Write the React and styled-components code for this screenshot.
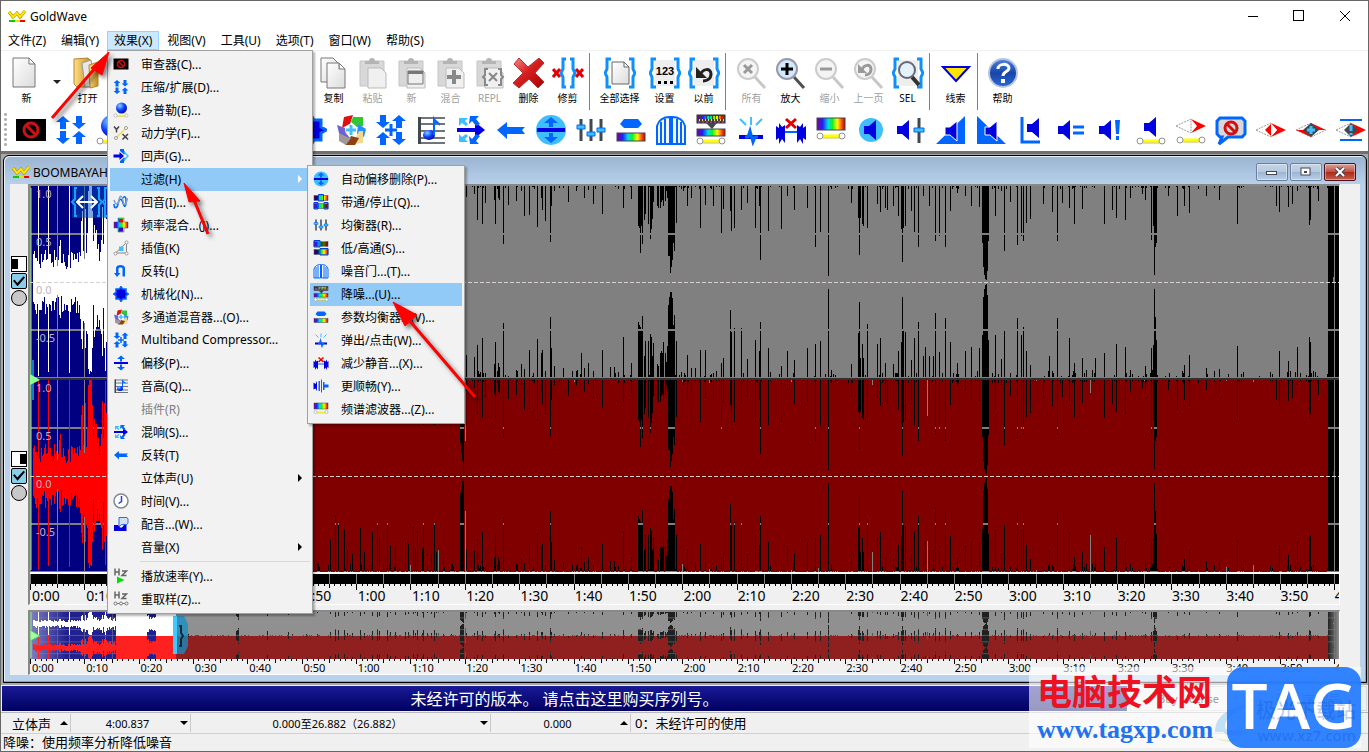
import React from 'react';
import styled, { createGlobalStyle, css } from 'styled-components';

const GlobalStyle = createGlobalStyle`
  * {
    box-sizing: border-box;
  }
  body {
    margin: 0;
    background: #f0f0f0;
  }
  body, button, input {
    font-family: 'Noto Sans', 'Noto Sans CJK SC', sans-serif;
    font-size: 12px;
    color: #000;
  }
  button {
    border: 0;
    padding: 0;
    background: none;
  }
`;

/* ---------- icons ---------- */

const BLUE = '#0066ff';
const DEEP = '#0000e0';
const SKY = '#40bfff';

const GradientDefs = styled.svg`
  position: absolute;
  width: 0;
  height: 0;
`;

const Defs = () => (
  <GradientDefs aria-hidden="true">
    <defs>
      <linearGradient id="spectrum">
        <stop offset="0" stopColor="#800090" />
        <stop offset=".2" stopColor="#2020ff" />
        <stop offset=".4" stopColor="#00e0e0" />
        <stop offset=".55" stopColor="#10f020" />
        <stop offset=".72" stopColor="#ffff00" />
        <stop offset=".88" stopColor="#ff5000" />
        <stop offset="1" stopColor="#c00000" />
      </linearGradient>
      <linearGradient id="paper" x1="0" y1="0" x2="1" y2="1">
        <stop offset="0" stopColor="#fff" />
        <stop offset="1" stopColor="#dcdcdc" />
      </linearGradient>
      <linearGradient id="folder">
        <stop offset="0" stopColor="#ffe08a" />
        <stop offset="1" stopColor="#c48a1c" />
      </linearGradient>
      <linearGradient id="redx" x1="0" y1="0" x2="1" y2="1">
        <stop offset="0" stopColor="#f88" />
        <stop offset=".45" stopColor="#d62020" />
        <stop offset="1" stopColor="#a80000" />
      </linearGradient>
      <radialGradient id="ball" cx=".35" cy=".3" r=".8">
        <stop offset="0" stopColor="#7fd4ff" />
        <stop offset=".5" stopColor="#1040ff" />
        <stop offset="1" stopColor="#0000a0" />
      </radialGradient>
      <linearGradient id="help" x1="0" y1="0" x2="0" y2="1">
        <stop offset="0" stopColor="#4f83e6" />
        <stop offset=".5" stopColor="#1746a8" />
        <stop offset="1" stopColor="#2f66d8" />
      </linearGradient>
      <linearGradient id="navy" x1="0" y1="0" x2="1" y2="0">
        <stop offset="0" stopColor="#8080c0" />
        <stop offset=".25" stopColor="#202090" />
      </linearGradient>
      <linearGradient id="tail">
        <stop offset="0" stopColor="#202020" />
        <stop offset="1" stopColor="#909090" />
      </linearGradient>
    </defs>
  </GradientDefs>
);

const up = (x, y) => `M${x} ${y}l7 6h-4v7h-6v-7h-4z`;
const down = (x, y) => `M${x} ${y}l7-6h-4v-7h-6v7h-4z`;

const Link = ({ y = 27 }) => (
  <g>
    <path d={`M8 ${y}h16`} stroke="#ffff00" strokeWidth="3" />
    <path d={`M8 ${y + 2}h16`} stroke="#c8c040" strokeWidth="1" />
    <circle cx="5" cy={y} r="3" fill="#fff" stroke="#909090" />
    <circle cx="27" cy={y} r="3" fill="#fff" stroke="#909090" />
  </g>
);

const Spectrum = ({ y, h = 8, x = 2, w = 28 }) => (
  <rect x={x} y={y} width={w} height={h} fill="url(#spectrum)" stroke="#404850" />
);

const No = ({ cx = 16, cy = 16, r = 7 }) => (
  <g fill="none" stroke="#d01010" strokeWidth="3">
    <circle cx={cx} cy={cy} r={r} />
    <path d={`M${cx - 5} ${cy - 5}l10 10`} />
  </g>
);

const Braces = () => (
  <path
    d="M7 2H3v10l-2 4 2 4v10h4M25 2h4v10l2 4-2 4v10h-4"
    fill="none"
    stroke="#1090ff"
    strokeWidth="3"
  />
);

const Clipboard = ({ children }) => (
  <g>
    <path d="M3 4h24v25H3z" fill="#d8d8d8" stroke="#c4c4c4" />
    <path d="M8 7V4h4a3 3 0 0 1 6 0h4v3z" fill="#b4b4b4" />
    <path d="M11 11h13l5 5v15H11z" fill="#f0f0f0" stroke="#bbb" />
    {children}
  </g>
);

const Lens = ({ dim, children }) => (
  <g>
    <path d="M19 20l10 11" stroke={dim ? '#c8c8c8' : '#505050'} strokeWidth="3" />
    <circle cx="12" cy="12" r="10" fill={dim ? '#f4f4f4' : '#cfe8fb'} stroke={dim ? '#ccc' : '#99a'} strokeWidth="2" />
    {children}
  </g>
);

const Eye = ({ y = 16, children, flip }) => (
  <g>
    <path
      d={`M1 ${y}L16 ${y - 7}L16 ${y + 7}z`}
      fill="#fff"
      stroke="#999"
      strokeDasharray="2 1"
    />
    {flip && <path d={`M1 ${y}h15v7z`} fill="#f00" />}
    <path
      d={flip ? `M16 ${y - 7}L31 ${y}L16 ${y}z` : `M16 ${y - 7}L31 ${y}L16 ${y + 7}l6-7z`}
      fill="#f00"
    />
    {flip && <path d={`M16 ${y + 7}L31 ${y}`} stroke="#999" strokeDasharray="2 1" />}
    {children}
  </g>
);

const speaker = (x, y) => `M${x} ${y - 4}h5l7-6v20l-7-6h-5z`;

const icons = {
  file: <path d="M2 1h16l6 6v23H2zM18 1v6h6" fill="url(#paper)" stroke="#777" />,
  folder: (
    <g>
      <path d="M2 2l14-1 3 3v26H5l-3-3z" fill="url(#folder)" stroke="#b8862a" />
      <path d="M10 6l9-3 4 26-10 1z" fill="#e8e8e8" stroke="#999" />
      <path d="M17 8l9-3v24l-8 2z" fill="url(#folder)" stroke="#b8862a" />
    </g>
  ),
  copy: (
    <g fill="url(#paper)" stroke="#777">
      <path d="M3 1h12l6 6v18H3z" />
      <path d="M9 6h12l6 6v19H9zM21 6v6h6" />
    </g>
  ),
  paste: <Clipboard />,
  pasteNew: (
    <Clipboard>
      <path d="M12 14h15v13H12z" fill="#eee" stroke="#777" />
      <path d="M12 14h15v3H12z" fill="#777" />
    </Clipboard>
  ),
  pasteMix: (
    <Clipboard>
      <path d="M19 13v14M12 20h14" stroke="#888" strokeWidth="4" />
    </Clipboard>
  ),
  pasteRepl: (
    <Clipboard>
      <path
        d="M14 12h-3v6l-2 2 2 2v6h3M24 12h3v6l2 2-2 2v6h-3M15 16l8 8M23 16l-8 8"
        fill="none"
        stroke="#888"
        strokeWidth="2"
      />
    </Clipboard>
  ),
  remove: (
    <path
      d="M6 1l9 9L26 1l5 5-9 10 9 9-6 6-9-9-10 9-6-5 10-10-9-9z"
      fill="url(#redx)"
      stroke="#b83030"
    />
  ),
  trim: (
    <g fill="none">
      <path d="M14 2h-3v10l-2 4 2 4v10h3M18 2h3v10l2 4-2 4v10h-3" stroke="#1090ff" strokeWidth="3" />
      <path d="M1 12l7 8M8 12l-7 8M24 12l7 8M31 12l-7 8" stroke="#e00000" strokeWidth="3" />
    </g>
  ),
  selectAll: (
    <g>
      <path d="M8 5h12l5 5v17H8zM20 5v5h5" fill="url(#paper)" stroke="#666" />
      <Braces />
    </g>
  ),
  set: (
    <g>
      <rect x="6" y="3" width="20" height="26" fill="#eee" />
      <Braces />
      <text x="16" y="18" fontSize="11" fontWeight="700" textAnchor="middle" fontFamily="Liberation Sans">123</text>
      <path d="M9 24h3v3H9zM15 24h3v3h-3zM21 24h3v3h-3z" />
    </g>
  ),
  previous: (
    <g>
      <rect x="6" y="3" width="20" height="26" fill="#eee" />
      <Braces />
      <path d="M12 18c3-7 11-7 11-1s-6 7-8 7" fill="none" stroke="#222" strokeWidth="3" />
      <path d="M8 10v11h11z" fill="#222" />
    </g>
  ),
  zoomAll: (
    <Lens dim>
      <path d="M8 8l8 8M16 8l-8 8" stroke="#999" strokeWidth="3" />
    </Lens>
  ),
  zoomIn: (
    <Lens>
      <path d="M12 6v12M6 12h12" stroke="#000" strokeWidth="3" />
    </Lens>
  ),
  zoomOut: (
    <Lens dim>
      <path d="M6 12h12" stroke="#999" strokeWidth="3" />
    </Lens>
  ),
  zoomPrev: (
    <Lens dim>
      <path d="M9 13c2-6 9-6 9-1s-4 6-6 6" fill="none" stroke="#999" strokeWidth="3" />
      <path d="M5 7v9h9z" fill="#999" />
    </Lens>
  ),
  zoomSel: (
    <g>
      <rect x="6" y="3" width="20" height="26" fill="#eee" />
      <Braces />
      <path d="M20 20l7 8" stroke="#333" strokeWidth="4" />
      <circle cx="15" cy="13" r="8" fill="#e4f2fd" stroke="#667" strokeWidth="2" />
    </g>
  ),
  cue: <path d="M3 10h26L16 24z" fill="#ffe600" stroke="#0000e0" strokeWidth="2" />,
  help: (
    <g>
      <circle cx="16" cy="16" r="14" fill="url(#help)" stroke="#b8c4dc" strokeWidth="2" />
      <path d="M11 12c0-6 11-6 11-1 0 4-6 3-6 8" fill="none" stroke="#fff" strokeWidth="3" />
      <rect x="14" y="22" width="4" height="4" fill="#fff" />
    </g>
  ),
  censor: (
    <g>
      <rect x="1" y="5" width="30" height="22" />
      <No />
    </g>
  ),
  compress: <path d={up(8, 2) + down(24, 15) + down(8, 30) + up(24, 17)} fill={BLUE} />,
  doppler: (
    <g>
      <circle cx="17" cy="12" r="11" fill="url(#ball)" />
      <Link />
    </g>
  ),
  dynamics: (
    <g fill="none" stroke="#444" strokeWidth="3">
      <path d="M2 3l5 6 5-6M7 9v6M19 18l11 11M30 18L19 29" />
      <path d="M7 25L25 7" stroke="#f0e040" />
      <circle cx="6" cy="26" r="3" stroke="#999" strokeWidth="2" fill="#fff" />
      <circle cx="26" cy="6" r="3" stroke="#999" strokeWidth="2" fill="#fff" />
    </g>
  ),
  echo: (
    <g>
      <path d="M1 13h12V8l9 8-9 8v-5H1z" fill={DEEP} />
      <path d="M14 2h8v3l4 6-4 2-8-7zM14 30h8v-3l4-6-4-2-8 7z" fill={BLUE} />
      <path d="M22 8l8 8-8 8" fill="none" stroke={SKY} strokeWidth="3" />
    </g>
  ),
  flanger: (
    <g fill="none" strokeWidth="3">
      <path d="M2 20c0 10 6 10 8 0s6-14 10-2 6 6 6-4-3-10-6-6" stroke={BLUE} />
      <path d="M2 12c4 12 8 10 10 0s6-10 8 2 6 8 9-6" stroke="#7aa0c8" />
    </g>
  ),
  filterMix: (
    <g>
      <path d="M10 2h12v8h8v12h-8v8H10v-8H2V10h8z" fill="url(#spectrum)" stroke="#404850" />
      <path d="M12 4h8v7h-8z" fill="#f00" />
      <path d="M12 21h8v8h-8z" fill="#4000c0" />
    </g>
  ),
  interpolate: (
    <g>
      <path d="M5 26L27 5v21z" fill="#eef2f4" stroke="#888" strokeWidth="2" />
      <rect x="12" y="13" width="9" height="9" fill={SKY} />
      <g fill="#fff" stroke="#999" strokeWidth="2">
        <circle cx="5" cy="27" r="3" />
        <circle cx="27" cy="5" r="3" />
        <circle cx="27" cy="27" r="3" />
      </g>
    </g>
  ),
  invert: <path d="M2 20h4V10c0-8 18-8 18 0v17h-5V11c0-3-8-3-8 0v9h4l-7 8z" fill={BLUE} />,
  mechanize: (
    <path d="M6 6h7l3-5 3 5h7v7l5 3-5 3v7h-7l-3 5-3-5H6v-7l-5-3 5-3z" fill={DEEP} stroke={BLUE} strokeWidth="3" />
  ),
  mixer: (
    <g>
      <path d="M9 3l9-2-3 9-8 4z" fill="#e01010" />
      <path d="M18 3h10v9l-6 1-6-5z" fill="#30c830" />
      <path d="M23 10l8 5-2 8-7-3z" fill="#2090ff" />
      <path d="M24 17h4v12l-10 1z" fill="#f0d890" />
      <path d="M10 31l6-9 8 2-4 7z" fill="#904010" />
      <path d="M4 27V16l12 8-5 7z" fill="#a09898" />
      <path d="M2 11l8 3 4 10-10-5z" fill="#7060d0" />
      <circle cx="16" cy="16" r="6" fill="#fff" />
      <path d="M16 11v10M11 16h10" stroke={SKY} strokeWidth="3" />
    </g>
  ),
  multiband: (
    <g fill={BLUE}>
      <path d={down(8, 14) + up(24, 1) + up(8, 18) + down(24, 31)} />
      <path d="M16 10v12M10 16h12" stroke={BLUE} strokeWidth="3" />
    </g>
  ),
  offset: (
    <g>
      <path d="M2 14h28v4H2z" fill={DEEP} />
      <path d="M16 1l8 7h-6v5h-4V8H8zM16 31l8-7h-6v-5h-4v5H8z" fill={BLUE} />
    </g>
  ),
  pitch: (
    <g>
      <path d="M4 4h26M4 10h26M4 17h26M4 24h26M4 29h26" stroke="#404850" strokeWidth="1.5" />
      <path d="M3 3h3v27H3z" fill="#404850" />
      <ellipse cx="14" cy="21" rx="6" ry="5" fill="url(#ball)" />
      <path d="M18 21V1c1 6 8 6 7 11-2-3-5-3-5-3v12z" fill={BLUE} />
    </g>
  ),
  reverb: (
    <g>
      <path d="M2 14h18V8l10 8-10 8v-6H2z" fill={DEEP} />
      <path d="M15 2h9l-3 3 4 5-4 2-4-5-3 3zM15 30h9l-3-3 4-5-4-2-4 5-3-3z" fill={BLUE} />
      <path d="M4 4h9l-3 3 3 3-2 2-4-3-3 3zM4 28h9l-3-3 3-3-2-2-4 3-3-3z" fill={SKY} />
    </g>
  ),
  reverse: <path d="M2 16l10-8v5h18l-3 3 3 4H12v5z" fill={BLUE} />,
  autoOffset: (
    <g>
      <circle cx="16" cy="16" r="15" fill={SKY} />
      <path d="M2 14h28v4H2z" fill={DEEP} />
      <path d="M16 3l7 6h-5v4h-4V9H9zM16 29l7-6h-5v-4h-4v4H9z" fill={BLUE} />
    </g>
  ),
  equalizer: (
    <g>
      <path d="M6 5v22M16 5v22M26 5v22" stroke="#404850" strokeWidth="3" />
      <path d="M2 11h8v4H2zM12 18h8v4h-8zM22 14h8v4h-8z" fill={SKY} stroke={BLUE} />
    </g>
  ),
  parametric: (
    <g>
      <path d="M9 5h14l4 5-4 4H9l-4-4z" fill={BLUE} />
      <Spectrum y={19} h={8} />
    </g>
  ),
  gate: (
    <g fill="#f0f6ff" stroke={BLUE} strokeWidth="2">
      <path d="M2 30V12C4 5 10 3 15 3v27zM17 30V3c6 0 11 2 13 9v18z" />
      <path d="M6 30V8M10 30V5M22 30V5M26 30V8" />
    </g>
  ),
  noise: (
    <g>
      <rect x="2" y="1" width="28" height="8" fill="#404040" stroke="#303030" />
      <path d="M3 3h26v1H3z" fill="none" stroke="url(#spectrum)" strokeWidth="2" strokeDasharray="2 1" />
      <path d="M4 6h25" stroke="#e8e060" strokeWidth="2" strokeDasharray="1 2" />
      <path d="M3 8h26" stroke="#e040c0" strokeDasharray="2 2" />
      <path d="M11 9h11l-5 6z" fill="#404850" />
      <Spectrum y={15} h={7} />
      <Link y={27} />
    </g>
  ),
  pop: (
    <g>
      <path d="M16 3v8M5 5l6 6M27 5l-6 6" stroke={SKY} strokeWidth="2" />
      <path d="M4 23h24" stroke={DEEP} strokeWidth="4" />
      <path d="M10 23h3l2-6 3 11 2-5h3" fill="none" stroke={BLUE} strokeWidth="3" />
    </g>
  ),
  silence: (
    <g>
      <path d="M1 12l3 2V9l3 4 3-2v18l-3-4-3 5v-6l-3 2zM31 12l-3 2V9l-3 4-3-2v18l3-4 3 5v-6l3 2z" fill={DEEP} />
      <path d="M10 18h12" stroke={BLUE} strokeWidth="2" />
      <path d="M11 5l10 9M21 5l-10 9" stroke="#e00000" strokeWidth="3" />
    </g>
  ),
  spectrumFilter: (
    <g>
      <Spectrum y={4} h={12} />
      <Link y={22} />
    </g>
  ),
  bandpass: (
    <g>
      <Spectrum y={3} h={10} />
      <Spectrum y={19} h={10} />
      <path d="M3 4h8v8H3zM21 20h8v8h-8z" fill="#000" opacity=".6" />
      <path d="M11 1h10v13H11zM2 17h8v13H2zM22 17h8v13h-8z" fill="none" stroke="#0040e0" strokeWidth="2" />
    </g>
  ),
  lowpass: (
    <g>
      <Spectrum y={3} h={10} />
      <Spectrum y={19} h={10} />
      <path d="M15 4h14v8H15zM3 20h10v8H3z" fill="#000" opacity=".6" />
      <path d="M2 1h12v13H2zM14 17h16v13H14z" fill="none" stroke="#0040e0" strokeWidth="2" />
    </g>
  ),
  smoother: (
    <g>
      <path d="M1 9l4 3 3-6v20l-3-5-4 2z" fill={DEEP} />
      <path d="M11 6h3v20h-3zM16 3h2v26h-2zM20 8h3v16h-3zM23 13h8v6h-8z" fill={BLUE} />
    </g>
  ),
  volMatch: (
    <g>
      <circle cx="16" cy="16" r="12" fill={SKY} />
      <path d={speaker(9, 16)} fill={DEEP} />
    </g>
  ),
  volume: (
    <g>
      <path d={speaker(2, 16)} fill={DEEP} />
      <path d="M24 4v25" stroke="#404850" strokeWidth="3" />
      <path d="M19 14h10v4H19z" fill={SKY} stroke={BLUE} />
    </g>
  ),
  fadeIn: (
    <g>
      <path d="M30 2v28H1z" fill={BLUE} />
      <path d={speaker(10, 17)} fill={DEEP} stroke="#fff" />
    </g>
  ),
  fadeOut: (
    <g>
      <path d="M2 2v28h29z" fill={BLUE} />
      <path d={speaker(10, 17)} fill={DEEP} stroke="#fff" />
    </g>
  ),
  fadeShape: (
    <g>
      <path d="M7 3v25h18" fill="none" stroke={BLUE} strokeWidth="3" />
      <path d={speaker(12, 14)} fill={DEEP} />
    </g>
  ),
  volEqual: (
    <g>
      <path d={speaker(3, 16)} fill={DEEP} />
      <path d="M18 13h11M18 19h11" stroke={BLUE} strokeWidth="3" />
    </g>
  ),
  volMax: (
    <g>
      <path d={speaker(4, 16)} fill={DEEP} />
      <path d="M20 6h5l-1 14h-3zM21 22h3v4h-3z" fill={BLUE} />
    </g>
  ),
  volShape: (
    <g>
      <path d={speaker(9, 13)} fill={DEEP} />
      <Link />
    </g>
  ),
  panShape: (
    <g>
      <Eye y={12} />
      <Link y={26} />
    </g>
  ),
  speech: (
    <g>
      <path d="M5 4h22l3 3v13l-3 3H13l-9 7 3-7H5l-3-3V7z" fill="#d8d8dc" stroke={BLUE} strokeWidth="3" />
      <No cy={14} r={6} />
    </g>
  ),
  eyeHalf: (
    <Eye>
      <path d="M10 16l6-6v12z" fill="#f00" />
      <path d="M16 10l6 6-6 6z" fill="#fff" />
    </Eye>
  ),
  eyePlus: (
    <Eye flip>
      <path d="M16 9l8 7-8 7-8-7z" fill="#404850" />
      <path d="M16 12v8M12 16h8" stroke={SKY} strokeWidth="3" />
    </Eye>
  ),
  eyeMax: (
    <Eye>
      <path d="M16 9l7 7-7 7-7-7z" fill="#404850" />
      <path d="M16 11v6M16 19v2" stroke={SKY} strokeWidth="3" />
      <path d="M5 6h22M5 26h22" stroke={BLUE} strokeWidth="2" />
    </Eye>
  ),
  clock: (
    <g>
      <circle cx="16" cy="16" r="14" fill="#fff" stroke="#808890" strokeWidth="3" />
      <path d="M17 6v11l-6 4" fill="none" stroke="#2040e0" strokeWidth="3" />
    </g>
  ),
  voice: (
    <g>
      <path d="M12 3h16l2 3v8l-2 3H17l-5 5V6z" fill="#cfe0f4" stroke="#3070d0" strokeWidth="2" />
      <path d="M2 18h8l4 5h4l4-5h5v12H2z" fill={DEEP} />
    </g>
  ),
  playRate: (
    <g>
      <path d="M4 1v14M4 8h8M12 1v14M18 6h9l-9 9h9" fill="none" stroke="#666" strokeWidth="3" />
      <path d="M8 17l15 7-15 7z" fill="#00e000" />
    </g>
  ),
  resample: (
    <g fill="none" stroke="#777" strokeWidth="2">
      <path d="M4 1v14M4 8h8M12 1v14M18 6h9l-9 9h9" stroke="#666" strokeWidth="3" />
      <circle cx="5" cy="25" r="3" />
      <circle cx="16" cy="25" r="3" />
      <circle cx="27" cy="25" r="3" />
      <path d="M8 25h5M19 25h5" />
    </g>
  ),
};

const Svg = styled.svg`
  display: block;
  flex: none;
  width: ${({ $size }) => $size}px;
  height: ${({ $size }) => $size}px;
`;

const Icon = ({ name, size = 32 }) => (
  <Svg $size={size} viewBox="0 0 32 32" aria-hidden="true">
    {icons[name]}
  </Svg>
);

const LogoSvg = styled.svg`
  flex: none;
  width: 18px;
  height: 16px;
`;

const Logo = () => (
  <LogoSvg viewBox="0 0 18 16" aria-hidden="true">
    <path d="M1 4l4 5 4-4 3 4 5-6" fill="none" stroke="#b09000" strokeWidth="3" />
    <path d="M1 4l4 5 4-4 3 4 5-6" fill="none" stroke="#ffe800" strokeWidth="2" />
    <path d="M1 13h6" stroke="#00d000" strokeWidth="2" />
    <path d="M7 13h5" stroke="#f0e000" strokeWidth="2" />
    <path d="M12 13h5" stroke="#f00000" strokeWidth="2" />
  </LogoSvg>
);

/* ---------- window chrome ---------- */

const Window = styled.div`
  position: relative;
  display: flex;
  flex-direction: column;
  min-height: 100vh;
  overflow: hidden;
  border: 1px solid #666;
  background: #f0f0f0;
`;

const TitleBar = styled.header`
  display: flex;
  flex: none;
  align-items: center;
  height: 30px;
  padding-left: 7px;
  gap: 4px;
  background: #fff;
  font-size: 12px;
`;

const Caption = styled.span`
  flex: 1;
`;

const CaptionButtons = styled.div`
  display: flex;
`;

const CaptionButton = styled.button`
  display: grid;
  place-items: center;
  width: 46px;
  height: 28px;
`;

const MenuBar = styled.nav`
  display: flex;
  flex: none;
  gap: 1px;
  height: 20px;
  background: #fff;
  border-bottom: 1px solid #f0f0f0;
`;

const MenuSlot = styled.div`
  position: relative;
`;

const MenuTitle = styled.button`
  height: 19px;
  padding: 0 6px;
  line-height: 17px;
  border: 1px solid ${({ $open }) => ($open ? '#99d1ff' : 'transparent')};
  background: ${({ $open }) => ($open ? '#cce8ff' : 'transparent')};
  white-space: nowrap;
`;

const popup = css`
  position: absolute;
  padding: 2px;
  border: 1px solid #a0a0a0;
  background: #f2f2f2;
  box-shadow: 2px 2px 2px rgba(0, 0, 0, 0.3);
`;

const Menu = styled.div`
  ${popup}
  top: 19px;
  left: 0;
  z-index: 5;
  width: 206px;
`;

const SubMenu = styled.div`
  ${popup}
  top: -3px;
  left: 197px;
  z-index: 6;
  width: 158px;
`;

const MenuRow = styled.div`
  position: relative;
  background: ${({ $active }) => ($active ? '#91c9f7' : 'transparent')};
`;

const MenuItem = styled.button`
  display: grid;
  grid-template-columns: 31px 1fr 12px;
  align-items: center;
  width: 100%;
  height: 23px;
  padding-bottom: 2px;
  text-align: left;
  white-space: nowrap;

  &:disabled {
    color: #808080;
  }
`;

const IconCell = styled.span`
  padding-left: 3px;
`;

const SubArrow = styled.span`
  width: 0;
  height: 0;
  border: 4px solid transparent;
  border-left-color: ${({ $light }) => ($light ? '#fff' : '#000')};
`;

const MenuLine = styled.hr`
  height: 6px;
  margin: 0 0 0 30px;
  border: 0;
  background: linear-gradient(#d8d8d8, #d8d8d8) 0 2px / 100% 1px no-repeat;
`;

const filterMenu = [
  ['autoOffset', '自动偏移删除(P)...'],
  ['bandpass', '带通/停止(Q)...'],
  ['equalizer', '均衡器(R)...'],
  ['lowpass', '低/高通(S)...'],
  ['gate', '噪音门...(T)...'],
  ['noise', '降噪...(U)...', { active: true }],
  ['parametric', '参数均衡器...(V)...'],
  ['pop', '弹出/点击(W)...'],
  ['silence', '减少静音...(X)...'],
  ['smoother', '更顺畅(Y)...'],
  ['spectrumFilter', '频谱滤波器...(Z)...'],
];

const effectMenu = [
  ['censor', '审查器(C)...'],
  ['compress', '压缩/扩展(D)...'],
  ['doppler', '多普勒(E)...'],
  ['dynamics', '动力学(F)...'],
  ['echo', '回声(G)...'],
  [null, '过滤(H)', { active: true, sub: filterMenu }],
  ['flanger', '回音(I)...'],
  ['filterMix', '频率混合...(J)...'],
  ['interpolate', '插值(K)'],
  ['invert', '反转(L)'],
  ['mechanize', '机械化(N)...'],
  ['mixer', '多通道混音器...(O)...'],
  ['multiband', 'Multiband Compressor...'],
  ['offset', '偏移(P)...'],
  ['pitch', '音高(Q)...'],
  [null, '插件(R)', { disabled: true }],
  ['reverb', '混响(S)...'],
  ['reverse', '反转(T)'],
  [null, '立体声(U)', { arrow: true }],
  ['clock', '时间(V)...'],
  ['voice', '配音...(W)...'],
  [null, '音量(X)', { arrow: true }],
  'line',
  ['playRate', '播放速率(Y)...'],
  ['resample', '重取样(Z)...'],
];

const MenuItems = ({ items }) =>
  items.map(item => {
    if (item === 'line') return <MenuLine key="line" />;
    const [icon, label, opts = {}] = item;
    return (
      <MenuRow key={label} $active={opts.active}>
        <MenuItem disabled={opts.disabled}>
          <IconCell>{icon && <Icon name={icon} size={16} />}</IconCell>
          <span>{label}</span>
          {(opts.arrow || opts.sub) && <SubArrow $light={opts.active} />}
        </MenuItem>
        {opts.sub && (
          <SubMenu>
            <MenuItems items={opts.sub} />
          </SubMenu>
        )}
      </MenuRow>
    );
  });

const menus = ['文件(Z)', '编辑(Y)', '效果(X)', '视图(V)', '工具(U)', '选项(T)', '窗口(W)', '帮助(S)'];

/* ---------- toolbars ---------- */

const Toolbar = styled.div`
  display: flex;
  flex: none;
  height: 59px;
  padding: 2px 0 0 6px;
  background: #fff;
  overflow: hidden;
`;

const Tool = styled.button`
  display: flex;
  flex: none;
  flex-direction: column;
  align-items: center;
  width: ${({ $wide }) => ($wide ? 51 : 39)}px;
  padding-top: 4px;
  font-size: 10px;
  line-height: 14px;
  gap: 2px;
  white-space: nowrap;

  &:disabled {
    color: #a0a0a0;
  }
`;

const ToolArrow = styled.button`
  flex: none;
  width: 22px;

  &::after {
    content: '';
    display: block;
    margin: 0 auto;
    width: 0;
    border: 4px solid transparent;
    border-top-color: #222;
    border-bottom: 0;
  }
`;

const ToolLine = styled.span`
  flex: none;
  width: 1px;
  margin: 0 ${({ $right }) => $right}px 0 2px;
  background: #808080;
`;

const Covered = styled.span`
  flex: none;
  width: 207px;
`;

const EffectBar = styled.div`
  display: flex;
  flex: none;
  align-items: center;
  height: 41px;
  padding-bottom: 2px;
  background: #fff;
  overflow: hidden;
`;

const Grip = styled.span`
  flex: none;
  width: 10px;
  height: 36px;
  background: radial-gradient(circle, #b0b0b0 1px, transparent 2px) 2px 0 / 5px 5px repeat-y;
`;

const EffectButton = styled.button`
  display: grid;
  flex: none;
  place-items: center;
  width: 40px;
  height: 38px;
`;

const tools = [
  ['file', '新'],
  'drop',
  ['folder', '打开'],
  'covered',
  ['copy', '复制'],
  ['paste', '粘贴', { disabled: true }],
  ['pasteNew', '新', { disabled: true }],
  ['pasteMix', '混合', { disabled: true }],
  ['pasteRepl', 'REPL', { disabled: true }],
  ['remove', '删除'],
  ['trim', '修剪'],
  4,
  ['selectAll', '全部选择', { wide: true }],
  ['set', '设置'],
  ['previous', '以前'],
  6,
  ['zoomAll', '所有', { disabled: true }],
  ['zoomIn', '放大'],
  ['zoomOut', '缩小', { disabled: true }],
  ['zoomPrev', '上一页', { disabled: true }],
  ['zoomSel', 'SEL'],
  6,
  ['cue', '线索'],
  5,
  ['help', '帮助'],
];

const effectTools = [
  'censor', 'compress', 'doppler', 'dynamics', 'echo', 'flanger', 'interpolate', 'mechanize',
  'mixer', 'multiband', 'pitch', 'reverb', 'reverse', 'autoOffset', 'equalizer', 'parametric',
  'gate', 'noise', 'pop', 'silence', 'spectrumFilter', 'volMatch', 'volume', 'fadeIn', 'fadeOut',
  'fadeShape', 'volEqual', 'volMax', 'volShape', 'panShape', 'speech', 'eyeHalf', 'eyePlus', 'eyeMax',
];

/* ---------- waveform ---------- */

const WIDTH = 1309;
const SECONDS = 240.837;
const SELECTED = 146;
const HALF = 95;

// [x, gap above the wave, gap below the wave]
const gaps = [
  [158, 10, 14], [181, 4, 8], [208, 62, 62], [206, 35, 35], [207, 40, 45], [237, 30, 36], [258, 28, 30],
  [262, 4, 10], [276, 12, 16], [287, 6, 10],
  [300, 20, 32], [305, 38, 56], [308, 34, 48], [314, 32, 42], [317, 8, 22], [322, 6, 18],
  [330, 34, 44], [334, 14, 20], [342, 34, 40], [347, 38, 50], [349, 32, 36], [357, 40, 48],
  [360, 8, 26], [365, 22, 28],
  [375, 28, 30], [378, 16, 28], [383, 20, 45], [385, 6, 24], [387, 30, 41], [392, 10, 24],
  [393, 45, 48], [397, 10, 18], [401, 18, 18], [404, 45, 48], [406, 12, 20], [408, 12, 22],
  [413, 10, 15], [421, 4, 10], [430, 62, 78], [431, 72, 84], [432, 80, 90], [433, 92, 92],
  [435, 60, 60], [436, 11, 23],
  [444, 8, 21], [447, 34, 33], [452, 38, 40], [455, 17, 5], [464, 14, 14], [465, 38, 36],
  [468, 12, 15], [469, 14, 11], [473, 57, 54], [478, 19, 2], [486, 15, 8], [491, 5, 14],
  [494, 30, 9], [499, 29, 28], [507, 41, 39], [511, 12, 25], [512, 24, 28], [515, 35, 7],
  [520, 55, 60], [521, 20, 30], [524, 5, 12], [533, 2, 10], [538, 16, 0], [542, 0, 7],
  [546, 5, 7], [551, 0, 25], [554, 12, 10], [558, 4, 15], [563, 18, 7], [572, 28, 28],
  [580, 0, 11], [584, 0, 11], [593, 22, 41], [601, 13, 15],
  [608, 40, 55], [609, 42, 52], [610, 66, 50], [611, 40, 48], [612, 57, 61], [614, 34, 22],
  [615, 28, 37], [618, 38, 37], [620, 52, 44], [621, 43, 41], [622, 33, 22], [623, 16, 35],
  [627, 20, 14], [628, 22, 12], [630, 22, 25], [631, 16, 27], [632, 14, 25], [633, 20, 36],
  [635, 15, 25], [636, 5, 16], [637, 12, 32],
  [638, 69, 72], [639, 69, 80], [640, 86, 85], [641, 80, 85], [642, 73, 79], [643, 56, 52],
  [644, 64, 62], [646, 37, 37], [653, 5, 0], [657, 20, 23], [661, 12, 10], [665, 1, 10],
  [670, 42, 28], [675, 19, 28], [683, 20, 5], [691, 48, 15], [693, 23, 20], [700, 25, 67],
  [701, 45, 46], [704, 42, 49], [711, 24, 49], [717, 17, 19], [725, 42, 38], [729, 20, 27],
  [730, 73, 55], [738, 45, 30], [751, 43, 12], [757, 10, 27], [764, 24, 18], [777, 22, 30],
  [785, 60, 34], [790, 46, 37], [798, 89, 88], [821, 17, 14], [828, 32, 45], [829, 68, 75],
  [830, 32, 20], [832, 38, 34], [833, 40, 20], [837, 42, 53], [842, 5, 20], [847, 18, 34],
  [850, 26, 40], [855, 22, 15], [857, 24, 0], [863, 20, 14], [868, 30, 27], [871, 43, 36],
  [872, 75, 80], [873, 42, 47], [875, 40, 46], [881, 25, 18], [884, 46, 40], [888, 60, 55],
  [893, 10, 22], [895, 0, 31], [897, 36, 31], [899, 20, 22], [903, 0, 22], [905, 54, 64],
  [909, 49, 26], [915, 60, 59], [920, 25, 36], [927, 7, 15], [935, 10, 27], [941, 20, 31],
  [949, 21, 30], [952, 56, 43], [953, 80, 80], [954, 88, 88], [955, 92, 92], [956, 93, 93], [957, 84, 82],
  [958, 54, 38], [965, 30, 43], [971, 5, 19], [974, 64, 47], [980, 16, 5], [987, 58, 59],
  [991, 49, 43], [993, 54, 50], [996, 37, 27], [1000, 33, 13], [1013, 18, 0], [1019, 0, 22],
  [1022, 26, 7], [1027, 54, 59], [1032, 17, 0], [1039, 22, 40], [1044, 38, 15], [1052, 23, 20],
  [1060, 13, 37], [1065, 0, 20], [1074, 38, 25], [1082, 24, 0], [1086, 32, 34], [1095, 34, 31],
  [1100, 12, 8], [1112, 8, 0], [1115, 14, 12], [1121, 53, 30], [1123, 40, 33], [1124, 88, 88],
  [1125, 60, 60], [1126, 56, 38], [1138, 10, 0], [1147, 30, 0], [1154, 20, 13], [1159, 27, 23],
  [1176, 10, 10], [1189, 14, 9], [1207, 38, 32], [1246, 20, 0], [1249, 26, 27], [1258, 21, 17],
  [1262, 18, 0], [1267, 5, 31], [1279, 39, 41], [1280, 34, 36], [1288, 15, 0],
];

// small repeatable noise for the fine structure
const noise = n => {
  const v = Math.sin(n * 127.1) * 43758.5453;
  return v - Math.floor(v);
};

const peaks = {
  8: 95, 18: 95, 39: 95, 30: 42, 29: 36, 51: 60, 52: 70, 55: 72, 58: 90, 59: 95, 60: 95, 61: 95,
  62: 70, 64: 56, 72: 74, 74: 72, 75: 94, 76: 62,
};

const columns = [];
for (let x = 0; x < WIDTH; x += 1) {
  let top = HALF;
  let bottom = HALF;
  if (x < 3 || x > 1297) {
    top = 0;
    bottom = 0;
  } else if (x < 86) {
    const base = x < 50 ? 13 : 20;
    const swing = x < 50 ? 20 : 32;
    top = Math.min(HALF, peaks[x] || base + noise(x) * swing);
    bottom = Math.min(HALF, peaks[x] ? peaks[x] - noise(x) * 8 : base + noise(x + 9) * swing);
  } else if (x >= 117 && x < 126) {
    top = 38 + noise(x) * 40;
    bottom = top;
  }
  if (x > SELECTED && noise(x + 3) > 0.78) {
    top -= noise(x * 3) * 3;
    bottom -= noise(x * 5) * 8;
  }
  columns.push([top, bottom]);
}
gaps.forEach(([x, above, below]) => {
  columns[x] = [HALF - above, HALF - below];
});

const wavePath = (from, to) =>
  columns
    .slice(from, to)
    .map(([top, bottom], i) => `M${from + i} ${(HALF - top).toFixed(1)}h1V${(HALF + bottom).toFixed(1)}h-1z`)
    .join('');

const selectedPath = wavePath(0, SELECTED);
const restPath = wavePath(SELECTED, WIDTH);

const secondToX = s => (s * WIDTH) / SECONDS;
const every = step => Array.from({ length: Math.floor(SECONDS / step) + 1 }, (_, i) => i * step);
const lines = (step, y1, y2) =>
  every(step)
    .map(s => `M${Math.round(secondToX(s)) + 0.5} ${y1}V${y2}`)
    .join('');

const Wave = styled.svg`
  position: absolute;
  inset: 0;
  width: 100%;
  height: 100%;
`;

const Channel = styled.div`
  position: relative;
  display: flex;
  flex: 1 1 0;
  min-height: 0;
  border-bottom: ${({ $split }) => ($split ? '2px solid #303030' : '0')};
`;

const Levels = styled.div`
  position: relative;
  display: grid;
  grid-template-rows: repeat(4, 1fr);
  padding-left: 6px;
  font-size: 11px;
  line-height: 16px;
  color: #bdb4c4;
`;

const ChannelWave = ({ selected, rest, back = '#000', navy = '#000080', dashes = true }) => (
  <Wave viewBox={`0 0 ${WIDTH} 190`} preserveAspectRatio="none" shapeRendering="crispEdges" aria-hidden="true">
    <rect width={WIDTH} height="190" fill={back} />
    <rect width={SELECTED} height="190" fill={navy} />
    {!dashes && <rect x="1298" width="11" height="190" fill="url(#tail)" />}
    <path d={`${lines(5, 0, 190)}M0 47.5H${WIDTH}M0 142.5H${WIDTH}M0 189.5H${WIDTH}`} stroke="#808080" />
    <path d={selectedPath} fill={selected} />
    <path d={restPath} fill={rest} />
    {dashes && <path d={`M0 95.5H${WIDTH}`} stroke="#d8d0d0" strokeDasharray="4 2" />}
  </Wave>
);

const Mdi = styled.main`
  display: flex;
  flex: 1;
  min-height: 420px;
  padding: 1px 1px 2px 2px;
  border-top: 3px solid #707070;
  background: #a8a8a8;
`;

const Child = styled.section`
  display: flex;
  flex: 1;
  flex-direction: column;
  min-width: 0;
  padding: 0 6px 7px;
  border: 1px solid #000;
  border-radius: 6px 6px 0 0;
  background: linear-gradient(#99b4d1, #b9d1ea 29px);
  box-shadow: inset -1px -1px #30c8e8, inset 1px 1px #e8f0f8;
`;

const ChildTitle = styled.div`
  display: flex;
  flex: none;
  align-items: center;
  gap: 3px;
  height: 28px;
  padding: 4px 4px 0 2px;
  font-size: 12px;
`;

const ChildButton = styled.button`
  display: grid;
  place-items: center;
  width: 32px;
  height: 18px;
  border: 1px solid ${({ $close }) => ($close ? '#4a1020' : '#6b7fa0')};
  border-radius: 2px;
  background: ${({ $close }) =>
    $close
      ? 'linear-gradient(#d8a098, #c05040 50%, #a82818 50%, #c86048)'
      : 'linear-gradient(#c4d4e6, #b4c8de 50%, #9cb4d0 50%, #b8d0e8)'};
  box-shadow: inset 0 0 0 1px rgba(255, 255, 255, 0.4);
`;

const ChildButtons = styled.div`
  display: flex;
  gap: 2px;
`;

const Client = styled.div`
  display: flex;
  flex: 1;
  flex-direction: column;
  gap: 5px;
  min-height: 0;
  padding-right: 20px;
  background: #f0f0f0;
`;

const Main = styled.div`
  display: flex;
  flex: 1;
  min-height: 0;
`;

const Side = styled.div`
  display: flex;
  flex: none;
  flex-direction: column;
  width: 18px;
  padding: 0 0 32px 1px;
`;

const SideGroup = styled.div`
  display: flex;
  flex: 1;
  flex-direction: column;
  justify-content: center;
  gap: 1px;
`;

const SideSwatch = styled.button`
  width: 16px;
  height: 16px;
  border: 1px solid #000;
  background: linear-gradient(#000, #000) ${({ $right }) => ($right ? '100%' : '0')} 2px / 6px 10px no-repeat #fff;
`;

const SideCheck = styled.input`
  display: grid;
  place-items: center;
  appearance: none;
  width: 16px;
  height: 16px;
  margin: 0;
  border: 1px solid #000;
  border-radius: 2px;
  background: #87ceeb;

  &:checked::after {
    content: '';
    width: 12px;
    height: 10px;
    background: #000;
    clip-path: polygon(0 45%, 14% 35%, 36% 68%, 88% 0, 100% 12%, 38% 100%);
  }
`;

const SideRadio = styled.input`
  appearance: none;
  width: 16px;
  height: 16px;
  margin: 0;
  border: 1px solid #000;
  border-radius: 50%;
  background: #c8c8c8;
`;

const Frame = styled.div`
  position: relative;
  display: flex;
  flex: 1;
  flex-direction: column;
  min-width: 0;
  border: 2px solid #888;
  border-width: 2px 1px 1px 2px;
  border-right-color: #fff;
  border-bottom-color: #fff;
`;

const Overview = styled(Frame)`
  flex: none;
  height: 65px;
  margin-left: 18px;
`;

const OverviewWave = styled.div`
  display: flex;
  flex: none;
  flex-direction: column;
  height: 47px;
`;

const RulerSvg = styled.svg`
  display: block;
  flex: none;
  width: 100%;
  height: ${({ $height }) => $height}px;
  border-top: ${({ $line }) => ($line ? '2px solid #fff' : '0')};
`;

const RulerLabels = styled.div`
  position: relative;
  display: flex;
  margin: ${({ $small }) => ($small ? '-4px 0 0' : '-4px 0 -2px')};
  overflow: hidden;
  font-size: ${({ $small }) => ($small ? 11 : 14)}px;
  line-height: ${({ $small }) => ($small ? 15 : 20)}px;
`;

const RulerLabel = styled.span`
  flex: ${({ $last }) => ($last ? 0.837 : 10)} 0 0;
  min-width: 0;
  padding-left: 2px;
  white-space: nowrap;
`;

const Ruler = ({ small }) => {
  const top = small ? 0 : 10;
  return (
    <>
      <RulerSvg
        $height={small ? 5 : 18}
        $line={!small}
        viewBox={`0 0 ${WIDTH} ${small ? 5 : 16}`}
        preserveAspectRatio="none"
        shapeRendering="crispEdges"
        aria-hidden="true"
      >
        {!small && <rect width={WIDTH} height="10" />}
        {!small && <path d={lines(5, 0, 10)} stroke="#808080" />}
        <path d={lines(1, top, top + 2) + lines(5, top, top + 4) + lines(10, top, top + 6)} stroke="#000" />
      </RulerSvg>
      <RulerLabels $small={small}>
        {every(10).map(s => (
          <RulerLabel key={s} $last={s === 240}>
            {`${Math.floor(s / 60)}:${String(s % 60).padStart(2, '0')}`}
          </RulerLabel>
        ))}
      </RulerLabels>
    </>
  );
};

const StartHandle = styled.svg`
  position: absolute;
  left: 41px;
  top: 0;
  z-index: 1;
  width: 36px;
  height: 32px;
`;

const PlayMarker = styled.svg`
  position: absolute;
  left: 0;
  top: 0;
  width: 11px;
  height: 100%;
  overflow: visible;
`;

const EndHandle = styled.svg`
  position: absolute;
  left: 142px;
  top: 2px;
  width: 17px;
  height: 43px;
`;

/* ---------- bottom bars ---------- */

const Banner = styled.div`
  display: flex;
  flex: none;
  height: 28px;
  padding: 1px;
  border-bottom: 1px solid #b8b8b8;
`;

const BannerText = styled.button`
  flex: 1;
  background: linear-gradient(#1a1a98, #000060);
  color: #fff;
  font-size: 16px;
  line-height: 26px;
`;

const BannerButton = styled.button`
  width: 117px;
  margin-left: 3px;
  border: 1px solid #d8d8d8;
  background: #f0f0f0;
  font-size: ${({ $large }) => ($large ? 13 : 11)}px;
`;

const StatusBar = styled.div`
  display: flex;
  flex: none;
  align-items: stretch;
  height: 21px;
  padding: 1px 0;
  border-bottom: 1px solid #d0d0d0;
`;

const StatusCell = styled.button`
  display: flex;
  flex: none;
  align-items: center;
  width: ${({ $width }) => $width}px;
  padding: 0 2px 0 ${({ $text }) => ($text ? 11 : 4)}px;
  border-right: 1px solid #c8c8c8;
  font-size: ${({ $text }) => ($text ? 13 : 11)}px;
`;

const StatusValue = styled.span`
  flex: 1;
  text-align: ${({ $text }) => ($text ? 'left' : 'center')};
`;

const Triangle = styled.span`
  border: 4px solid transparent;
  border-${({ $up }) => ($up ? 'bottom' : 'top')}-color: #000;
  border-${({ $up }) => ($up ? 'top' : 'bottom')}-width: 0;
`;

const StatusMessage = styled.span`
  padding-left: 4px;
  font-size: 13px;
  line-height: 18px;
`;

const Hint = styled.footer`
  flex: none;
  height: 17px;
  padding-left: 2px;
  font-size: 13px;
  line-height: 16px;
`;

/* ---------- things lying over the window ---------- */

const Arrows = styled.svg`
  position: absolute;
  top: -1px;
  left: -1px;
  z-index: 10;
  width: 500px;
  height: 420px;
  pointer-events: none;
  filter: drop-shadow(3px 3px 2px rgba(0, 0, 0, 0.5));
`;

const Watermark = styled.div`
  position: absolute;
  right: 7px;
  bottom: 3px;
  z-index: 8;
  display: flex;
  align-items: stretch;
  width: 332px;
  height: 81px;
  background: rgba(255, 255, 255, 0.6);
`;

const SiteName = styled.div`
  flex: 1;
  padding-left: 8px;
  color: #ee1122;
  font: 700 35px/46px 'Noto Sans CJK SC', sans-serif;
  white-space: nowrap;
`;

const SiteUrl = styled.div`
  color: #2272f0;
  font: 700 26px/34px 'Liberation Serif', serif;
`;

const Swirl = styled.svg`
  position: absolute;
  right: 108px;
  bottom: 4px;
  width: 42px;
  height: 42px;
`;

const Tag = styled.div`
  position: relative;
  width: 134px;
  border-radius: 16px;
  background: rgba(28, 118, 255, 0.9);
  color: #fff;
  font: 600 64px/76px 'Open Sans', sans-serif;
  text-align: center;
`;

const Ghost = styled.div`
  position: absolute;
  right: 5px;
  bottom: 2px;
  color: rgba(0, 70, 190, 0.25);
  font: 500 20px/26px 'Noto Sans', 'Noto Sans CJK SC', sans-serif;
  text-align: right;
`;

const GhostUrl = styled.div`
  font-size: 15px;
  line-height: 22px;
`;

const App = () => (
  <Window>
    <GlobalStyle />
    <Defs />
    <TitleBar>
      <Logo />
      <Caption>GoldWave</Caption>
      <CaptionButtons>
        <CaptionButton aria-label="Minimize">
          <svg width="12" height="12"><path d="M1 6.5h10" stroke="#000" /></svg>
        </CaptionButton>
        <CaptionButton aria-label="Maximize">
          <svg width="12" height="12"><rect x=".5" y=".5" width="10" height="10" fill="none" stroke="#000" /></svg>
        </CaptionButton>
        <CaptionButton aria-label="Close">
          <svg width="12" height="12"><path d="M1 1l10 10M11 1L1 11" stroke="#000" /></svg>
        </CaptionButton>
      </CaptionButtons>
    </TitleBar>

    <MenuBar>
      {menus.map(name => (
        <MenuSlot key={name}>
          <MenuTitle $open={name === '效果(X)'}>{name}</MenuTitle>
          {name === '效果(X)' && (
            <Menu>
              <MenuItems items={effectMenu} />
            </Menu>
          )}
        </MenuSlot>
      ))}
    </MenuBar>

    <Toolbar>
      {tools.map((tool, i) => {
        if (tool === 'drop') return <ToolArrow key={i} aria-label="新" />;
        if (tool === 'covered') return <Covered key={i} />;
        if (typeof tool === 'number') return <ToolLine key={i} $right={tool} />;
        const [icon, label, opts = {}] = tool;
        return (
          <Tool key={i} disabled={opts.disabled} $wide={opts.wide}>
            <Icon name={icon} />
            {label}
          </Tool>
        );
      })}
    </Toolbar>
    <EffectBar>
      <Grip />
      {effectTools.map(name => (
        <EffectButton key={name} aria-label={name}>
          <Icon name={name} />
        </EffectButton>
      ))}
    </EffectBar>

    <Mdi>
      <Child>
        <ChildTitle>
          <Logo />
          <Caption>BOOMBAYAH</Caption>
          <ChildButtons>
            <ChildButton aria-label="Minimize">
              <svg width="12" height="8"><rect x=".5" y="3.5" width="10" height="3" fill="#fff" stroke="#445" /></svg>
            </ChildButton>
            <ChildButton aria-label="Maximize">
              <svg width="12" height="10">
                <rect x="1" y="1" width="9" height="7" fill="#fff" stroke="#445" />
                <rect x="4" y="4" width="3" height="2" fill="#445" />
              </svg>
            </ChildButton>
            <ChildButton $close aria-label="Close">
              <svg width="12" height="10">
                <path d="M2 1l8 8M10 1L2 9" stroke="#445" strokeWidth="4" />
                <path d="M2 1l8 8M10 1L2 9" stroke="#fff" strokeWidth="2" />
              </svg>
            </ChildButton>
          </ChildButtons>
        </ChildTitle>
        <Client>
          <Main>
            <Side>
              <SideGroup>
                <SideSwatch aria-label="L" />
                <SideCheck type="checkbox" defaultChecked aria-label="L" />
                <SideRadio type="radio" name="left" aria-label="L" />
              </SideGroup>
              <SideGroup>
                <SideSwatch $right aria-label="R" />
                <SideCheck type="checkbox" defaultChecked aria-label="R" />
                <SideRadio type="radio" name="right" aria-label="R" />
              </SideGroup>
            </Side>
            <Frame>
              <Channel $split>
                <ChannelWave selected="#fff" rest="#808080" />
                <Levels>
                  <span>1.0</span>
                  <span>0.5</span>
                  <span>0.0</span>
                  <span>-0.5</span>
                </Levels>
                <StartHandle viewBox="0 0 36 32" aria-hidden="true">
                  <rect x="1" width="35" height="32" fill="#0050c0" opacity=".5" />
                  <path
                    d="M6 2H4v11l-3 3 3 3v11h2M26 2h2v11l3 3-3 3v11h-2M36 2h-2v11l-2 3 2 3v11h2"
                    fill="none"
                    stroke="#18a0ff"
                    strokeWidth="2"
                  />
                  <path d="M7 16h18M12 10l-6 6 6 6M20 10l6 6-6 6" fill="none" stroke="#fff" strokeWidth="2" />
                </StartHandle>
              </Channel>
              <Channel>
                <ChannelWave selected="#f00" rest="#800000" />
                <Levels>
                  <span>1.0</span>
                  <span>0.5</span>
                  <span>0.0</span>
                  <span>-0.5</span>
                </Levels>
                <PlayMarker aria-hidden="true">
                  <path d="M1 -192V190" stroke="#90f090" />
                  <path d="M2 -20h2v40h-2" fill="#1080c0" />
                  <path d="M0 -6l10 6-10 5z" fill="#90ff90" />
                </PlayMarker>
              </Channel>
              <Ruler />
            </Frame>
          </Main>
          <Overview>
            <OverviewWave>
              <Channel>
                <ChannelWave selected="#fff" rest="#909090" back="#202020" navy="url(#navy)" dashes={false} />
              </Channel>
              <Channel>
                <ChannelWave selected="#ff2020" rest="#902020" back="#202020" navy="url(#navy)" dashes={false} />
              </Channel>
            </OverviewWave>
            <Ruler small />
            <PlayMarker aria-hidden="true">
              <path d="M1 0v46" stroke="#90f090" />
              <path d="M0 18l10 6-10 5z" fill="#a0ffa0" stroke="#60c060" />
            </PlayMarker>
            <EndHandle viewBox="0 0 17 43" aria-hidden="true">
              <path d="M4 2h8l4 8v22l-4 8H4z" fill="#1090c8" opacity=".75" />
              <path d="M1 2h4v38H1z" fill="#40c8ff" />
              <path d="M7 12h2v7l2 3-2 3v7H7" fill="none" stroke="#102838" strokeWidth="2" />
            </EndHandle>
          </Overview>
        </Client>
      </Child>
    </Mdi>

    <Banner>
      <BannerText>未经许可的版本。 请点击这里购买序列号。</BannerText>
      <BannerButton>Buy License</BannerButton>
      <BannerButton $large>输入序列号</BannerButton>
    </Banner>
    <StatusBar>
      <StatusCell $width={70} $text>
        <StatusValue $text>立体声</StatusValue>
        <Triangle $up />
      </StatusCell>
      <StatusCell $width={120}>
        <StatusValue>4:00.837</StatusValue>
        <Triangle />
      </StatusCell>
      <StatusCell $width={300}>
        <StatusValue>0.000至26.882（26.882）</StatusValue>
        <Triangle />
      </StatusCell>
      <StatusCell $width={140}>
        <StatusValue>0.000</StatusValue>
        <Triangle $up />
      </StatusCell>
      <StatusMessage>0：未经许可的使用</StatusMessage>
    </StatusBar>
    <Hint>降噪：使用频率分析降低噪音</Hint>

    <Arrows viewBox="0 0 500 420" aria-hidden="true">
      <g stroke="#f00" strokeWidth="3" fill="#f00">
        <path d="M52 118L96 67M208 234l-14-34M475 397l-66-77" />
        <path d="M109 52L91 68l11 7zM184 183l5 19 11-1zM393 302l12 24 12-11z" strokeWidth="1" />
      </g>
    </Arrows>

    <Watermark>
      <Swirl viewBox="0 0 42 42" aria-hidden="true">
        <path d="M4 30C4 12 22 4 40 2 24 10 14 16 14 24s16 2 18 6-14 6-20 0" fill="#7fc0f0" opacity=".45" />
        <path d="M4 36c12 4 26 2 32-12 0 14-18 20-32 12z" fill="#d8e880" opacity=".6" />
      </Swirl>
      <SiteName>
        电脑技术网
        <SiteUrl>www.tagxp.com</SiteUrl>
      </SiteName>
      <Tag>
        TAG
        <Ghost>
          极光下载站
          <GhostUrl>www.xz7.com</GhostUrl>
        </Ghost>
      </Tag>
    </Watermark>
  </Window>
);

export default App;
